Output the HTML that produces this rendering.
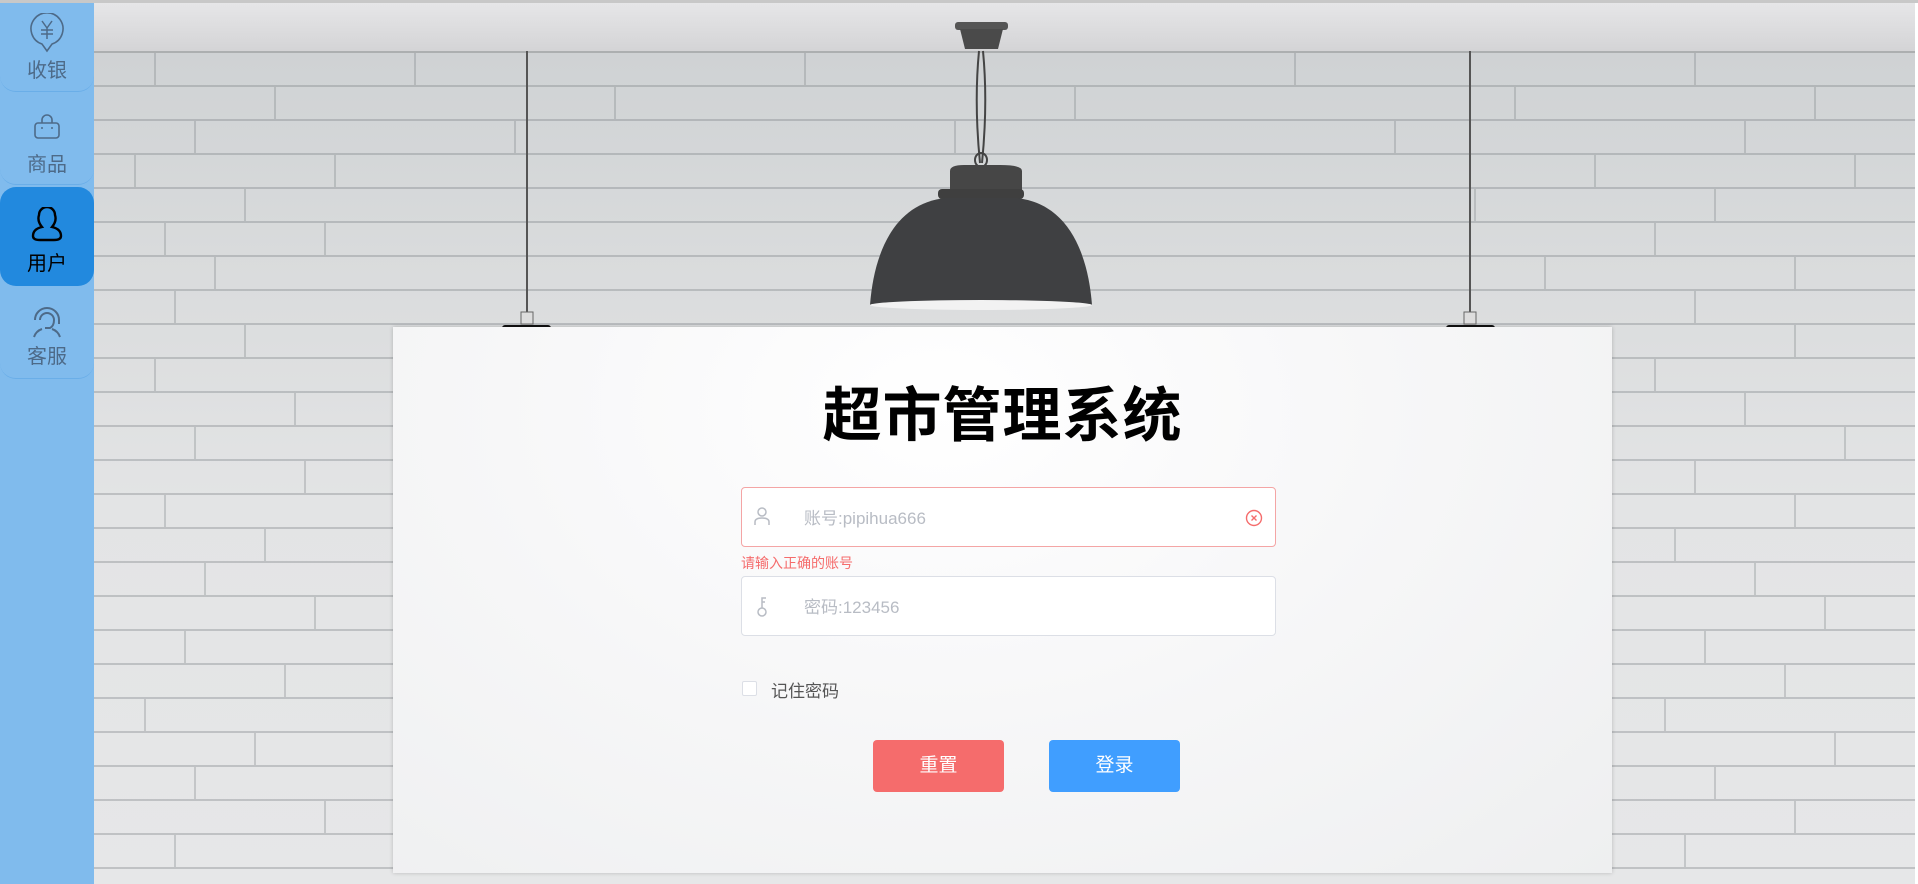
<!DOCTYPE html>
<html><head><meta charset="utf-8"><style>
*{margin:0;padding:0;box-sizing:border-box}
html,body{width:1918px;height:884px;overflow:hidden;background:#fff;font-family:"Liberation Sans","Noto Sans CJK SC",sans-serif}
.top{position:absolute;left:0;top:0;width:1918px;height:3px;background:#c8c8c8}
.wall{position:absolute;left:94px;top:3px;width:1821px;height:881px;background:#dfe0e1;overflow:hidden}
.ceil{position:absolute;left:0;top:0;width:100%;height:48px;background:linear-gradient(#e6e6e8,#d4d4d6)}
.ceil:after{content:"";position:absolute;left:0;bottom:-2px;width:100%;height:2px;background:#8a8d90;opacity:.6}
.bricks{position:absolute;left:0;top:50px;width:100%;bottom:0;
background:
repeating-linear-gradient(180deg,transparent 0 32px,rgba(120,125,130,.35) 32px 34px),
linear-gradient(180deg,#cfd2d4 0,#d9dbdc 200px,#e3e4e5 450px,#e6e7e8 100%)}
.vj{position:absolute;width:2px;height:32px;background:rgba(120,125,130,.3)}
.side{position:absolute;left:0;top:3px;width:94px;height:881px;background:#80bbed}
.it{position:absolute;left:0;width:94px;text-align:center;color:#4d6a88;font-size:20px;border-radius:0 0 16px 16px;border-bottom:1px solid #6aaee8}
.it.act{background:#2289de;color:#000;border-radius:16px;border:none}
.it svg{display:block;margin:0 auto}
.card{position:absolute;left:393px;top:327px;width:1219px;height:546px;background:radial-gradient(ellipse at 45% 15%,#fff 0,#f8f8f9 40%,#eeeff0 100%);box-shadow:0 0 4px rgba(0,0,0,.2)}
h1{position:absolute;left:393px;width:1219px;top:368px;text-align:center;font-size:59px;font-weight:bold;color:#000;letter-spacing:1px}
.inp{position:absolute;left:741px;width:535px;height:60px;background:#fff;border:1px solid #dcdfe6;border-radius:4px}
.inp span{position:absolute;left:62px;top:16px;font-size:17px;color:#b8bcc4}
.err{position:absolute;left:741px;top:553px;font-size:14px;color:#f56c6c}
.btn{position:absolute;top:740px;width:131px;height:52px;border-radius:4px;color:#fff;font-size:19px;text-align:center;line-height:52px}
</style></head><body>
<div class="top"></div>
<div class="wall">
<div class="ceil"></div>
<div class="bricks">
<div class="vj" style="left:60px;top:0"></div><div class="vj" style="left:320px;top:0"></div><div class="vj" style="left:710px;top:0"></div><div class="vj" style="left:1200px;top:0"></div><div class="vj" style="left:1600px;top:0"></div>
<div class="vj" style="left:180px;top:34px"></div><div class="vj" style="left:520px;top:34px"></div><div class="vj" style="left:980px;top:34px"></div><div class="vj" style="left:1420px;top:34px"></div><div class="vj" style="left:1720px;top:34px"></div>
<div class="vj" style="left:100px;top:68px"></div><div class="vj" style="left:420px;top:68px"></div><div class="vj" style="left:860px;top:68px"></div><div class="vj" style="left:1300px;top:68px"></div><div class="vj" style="left:1650px;top:68px"></div>
<div class="vj" style="left:40px;top:102px"></div><div class="vj" style="left:240px;top:102px"></div><div class="vj" style="left:1500px;top:102px"></div><div class="vj" style="left:1760px;top:102px"></div>
<div class="vj" style="left:150px;top:136px"></div><div class="vj" style="left:1380px;top:136px"></div><div class="vj" style="left:1620px;top:136px"></div>
<div class="vj" style="left:70px;top:170px"></div><div class="vj" style="left:230px;top:170px"></div><div class="vj" style="left:1560px;top:170px"></div>
<div class="vj" style="left:120px;top:204px"></div><div class="vj" style="left:1450px;top:204px"></div><div class="vj" style="left:1700px;top:204px"></div>
<div class="vj" style="left:80px;top:238px"></div><div class="vj" style="left:1600px;top:238px"></div>
<div class="vj" style="left:150px;top:272px"></div><div class="vj" style="left:1700px;top:272px"></div>
<div class="vj" style="left:60px;top:306px"></div><div class="vj" style="left:1560px;top:306px"></div>
<div class="vj" style="left:200px;top:340px"></div><div class="vj" style="left:1650px;top:340px"></div>
<div class="vj" style="left:100px;top:374px"></div><div class="vj" style="left:1750px;top:374px"></div>
<div class="vj" style="left:210px;top:408px"></div><div class="vj" style="left:1600px;top:408px"></div>
<div class="vj" style="left:70px;top:442px"></div><div class="vj" style="left:1700px;top:442px"></div>
<div class="vj" style="left:170px;top:476px"></div><div class="vj" style="left:1580px;top:476px"></div>
<div class="vj" style="left:110px;top:510px"></div><div class="vj" style="left:1660px;top:510px"></div>
<div class="vj" style="left:220px;top:544px"></div><div class="vj" style="left:1730px;top:544px"></div>
<div class="vj" style="left:90px;top:578px"></div><div class="vj" style="left:1610px;top:578px"></div>
<div class="vj" style="left:190px;top:612px"></div><div class="vj" style="left:1690px;top:612px"></div>
<div class="vj" style="left:50px;top:646px"></div><div class="vj" style="left:1570px;top:646px"></div>
<div class="vj" style="left:160px;top:680px"></div><div class="vj" style="left:1740px;top:680px"></div>
<div class="vj" style="left:100px;top:714px"></div><div class="vj" style="left:1620px;top:714px"></div>
<div class="vj" style="left:230px;top:748px"></div><div class="vj" style="left:1700px;top:748px"></div>
<div class="vj" style="left:80px;top:782px"></div><div class="vj" style="left:1590px;top:782px"></div>
</div>
<svg style="position:absolute;left:0;top:0" width="1821" height="340">
<line x1="433" y1="48" x2="433" y2="316" stroke="#555" stroke-width="2"/>
<line x1="1376" y1="48" x2="1376" y2="316" stroke="#555" stroke-width="2"/>
<rect x="427" y="309" width="12" height="12" fill="#ddd" stroke="#666"/>
<rect x="1370" y="309" width="12" height="12" fill="#ddd" stroke="#666"/>
<rect x="408" y="322" width="49" height="12" rx="3" fill="#111"/>
<rect x="1352" y="322" width="49" height="12" rx="3" fill="#111"/>
<rect x="861" y="19" width="53" height="8" rx="3" fill="#555"/>
<path d="M866 26h43l-5 20h-33z" fill="#4a4a4a"/>
<path d="M885 48 Q880 100 886 160 M889 48 Q894 100 888 160" stroke="#444" stroke-width="2" fill="none"/>
<ellipse cx="887" cy="157" rx="6" ry="7" fill="none" stroke="#444" stroke-width="2"/>
<path d="M856 168 Q856 162 870 162 h36 Q928 162 928 168 v22 h-72z" fill="#464646"/>
<rect x="844" y="186" width="86" height="10" rx="4" fill="#3f3f3f"/>
<path d="M852 195 C800 200 780 250 776 302 H998 C994 250 974 200 922 195z" fill="#3f4042"/>
<ellipse cx="887" cy="302" rx="111" ry="5" fill="#f2f2f2"/>
</svg>
</div>
<div class="side">
<div class="it" style="top:0;height:89px;padding-top:10px">
<svg width="36" height="42" viewBox="0 0 36 42"><path d="M18 38l-5-7A16 16 0 1 1 23 31z" fill="none" stroke="#4d6a88" stroke-width="1.6"/><path d="M13 8l5 7 5-7M18 15v11M12 17h12M12 21h12" stroke="#4d6a88" stroke-width="1.5" fill="none"/></svg>
<div style="margin-top:-1px">收银</div></div>
<div class="it" style="top:89px;height:93px;padding-top:22px">
<svg width="28" height="26" viewBox="0 0 28 26"><path d="M9 9V6a5 5 0 0 1 10 0v3" stroke="#4d6a88" stroke-width="1.6" fill="none"/><rect x="2" y="9" width="24" height="15" rx="3" fill="none" stroke="#4d6a88" stroke-width="1.6"/><circle cx="9" cy="14" r="1" fill="#4d6a88"/><circle cx="19" cy="14" r="1" fill="#4d6a88"/></svg>
<div style="margin-top:8px">商品</div></div>
<div class="it act" style="top:184px;height:99px;padding-top:20px">
<svg width="32" height="36" viewBox="0 0 32 36"><path d="M11 20Q6 14 8 8a8 8 0 0 1 16 0q2 6-3 12Q30 22 30 29q0 4-7 4H9q-7 0-7-4 0-7 9-9z" fill="none" stroke="#000" stroke-width="2.4"/></svg>
<div style="margin-top:4px">用户</div></div>
<div class="it" style="top:283px;height:93px;padding-top:18px">
<svg width="34" height="34" viewBox="0 0 34 34"><path d="M5 16a12 12 0 0 1 24 0v4" fill="none" stroke="#4d6a88" stroke-width="2"/><path d="M10 16a7 7 0 0 1 14 0q0 6-4 8h-5" fill="none" stroke="#4d6a88" stroke-width="2"/><path d="M4 33q2-6 8-8M30 33q-2-6-8-8" fill="none" stroke="#4d6a88" stroke-width="2"/></svg>
<div style="margin-top:2px">客服</div></div>
</div>
<div class="card"></div>
<h1>超市管理系统</h1>
<div class="inp" style="top:487px;border-color:#f4a5a5">
<svg style="position:absolute;left:12px;top:19px" width="16" height="19" viewBox="0 0 16 19"><circle cx="8" cy="5" r="4" fill="none" stroke="#b8bcc4" stroke-width="1.5"/><path d="M1 18v-3q0-4 7-4t7 4v3" fill="none" stroke="#b8bcc4" stroke-width="1.5"/></svg>
<span>账号:pipihua666</span>
<svg style="position:absolute;right:12px;top:21px" width="18" height="18" viewBox="0 0 18 18"><circle cx="9" cy="9" r="7.5" fill="none" stroke="#f56c6c" stroke-width="1.4"/><path d="M6.5 6.5l5 5M11.5 6.5l-5 5" stroke="#f56c6c" stroke-width="1.4"/></svg>
</div>
<div class="err">请输入正确的账号</div>
<div class="inp" style="top:576px">
<svg style="position:absolute;left:14px;top:19px" width="12" height="22" viewBox="0 0 12 22"><circle cx="6" cy="16" r="4" fill="none" stroke="#b8bcc4" stroke-width="1.5"/><path d="M6 12V2h4M6 6h3" fill="none" stroke="#b8bcc4" stroke-width="1.5"/></svg>
<span>密码:123456</span></div>
<div style="position:absolute;left:742px;top:681px;width:15px;height:15px;background:#fff;border:1px solid #dcdfe6;border-radius:2px"></div>
<div style="position:absolute;left:771px;top:677px;font-size:17px;color:#555">记住密码</div>
<div class="btn" style="left:873px;background:#f56c6c">重置</div>
<div class="btn" style="left:1049px;background:#409eff">登录</div>
</body></html>
